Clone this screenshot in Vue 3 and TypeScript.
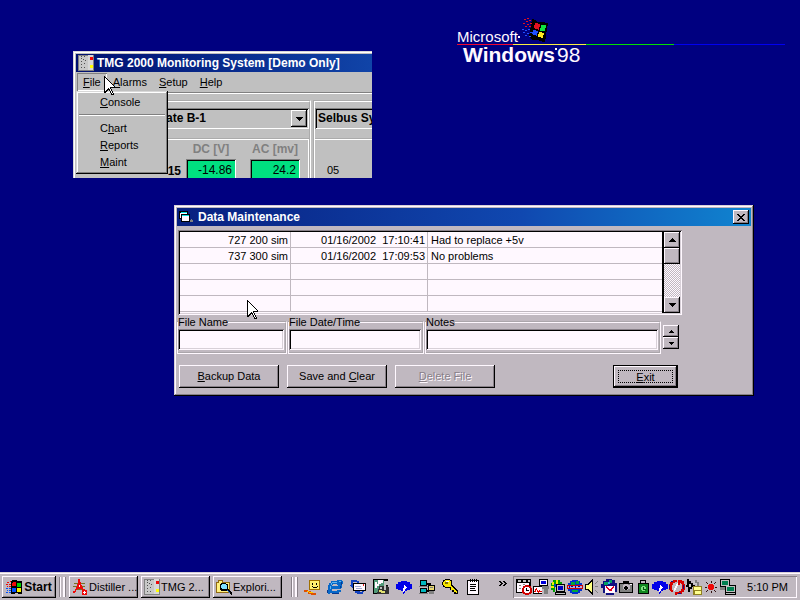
<script setup lang="ts">
import { ref } from 'vue'

type Stroke = [color: string, d: string]

const K = '#000'
const W = '#fff8ff'

/* Pixel icons on a 16x16 grid: each entry is a fill colour and the cells it covers. */
const icons: Record<string, Stroke[]> = {
  panel: [
    ['#808080', 'M0 0h16v16H0z'], ['#c8c8c8', 'M1 1h9v14H1z'], ['#d8d8d8', 'M10 0h5v15h-5z'],
    ['#505050', 'M3 1h1v1H3zM6 1h1v1H6zM3 3h1v1H3zM5 4h1v1H5zM3 6h1v1H3zM7 5h1v1H7zM3 9h1v1H3zM6 8h1v1H6zM3 12h1v1H3zM6 12h1v1H6z'],
    ['#f00808', 'M12 2h3v3h-3z'], ['#ffff00', 'M12 10h3v3h-3z'],
  ],
  form: [
    [K, 'M0 2h9v8H0z'], ['#00e0e0', 'M2 3h6v1H2z'], [W, 'M1 4h7v5H1z'],
    [K, 'M2 5h9v8H2z'], ['#00e0e0', 'M3 6h7v1H3z'], [W, 'M3 7h7v5H3z'], ['#808080', 'M12 10h1v1h1v2h-3v-2h1z'],
  ],
  flag: [
    [K, 'M6 1h5v1h5v13h-4v-1H9v1H5V2h1z'],
    ['#f00808', 'M7 3h3v4H6V4h1zM1 3h2v1H1zM4 2h1v1H4zM0 5h2v1H0zM3 5h2v1H3zM1 7h1v1H1zM3 7h2v1H3z'],
    ['#00d000', 'M11 4h4v4h-4z'], ['#0050ff', 'M6 9h4v4H6zM0 9h2v1H0zM3 9h2v1H3zM1 11h1v1H1zM3 11h2v1H3zM0 13h2v1H0zM3 13h2v1H3z'],
    ['#f8f000', 'M11 9h4v4h-4z'],
  ],
  distiller: [
    ['#787020', 'M2 4h11v1H2zM1 7h12v1H1zM3 10h9v1H3z'],
    ['#f00808', 'M6 0h2v3h1v3h1v2h1v2h2v1h-3v-1H5v1H4v2H3v1H1v-2h2v-2h1V8h1V5h1zM10 11h5v5h-5z'],
    [W, 'M7 6h1v2H7zM12 12h1v1h1v1h-1v1h-1v-1h-1v-1h1z'],
  ],
  explore: [
    ['#906810', 'M0 3h2V1h5v2h7v11H0z'], ['#fff080', 'M1 4h12v9H1zM3 2h3v2H3z'],
    [K, 'M5 4h5v1h2v5h1v1h1v1h1v1h1v1h1v2h-2v-1h-1v-1h-1v-1h-1v-1H5v-1H4V5h1z'],
    ['#80e0ff', 'M6 5h4v1h1v4H6V9H5V6h1z'], ['#1060d0', 'M11 11h1v1h1v1h1v1h-1v-1h-1v-1h-1z'],
  ],
  desktop: [
    ['#a07000', 'M5 1h11v10H5z'], ['#fff070', 'M6 2h9v8H6z'], [K, 'M8 4h1v2H8zM12 4h1v2h-1zM8 7h1v1h4V7h1v1h-1v1H9V8H8z'],
    ['#e05000', 'M0 11h4v1h3v2h5v2H7v-1H4v-2H0z'], ['#ffd000', 'M3 12h2v1h4v1H5v-1H3z'],
  ],
  ie: [
    ['#0868c8', 'M4 2h6V1h5v1h1v3h-1v4h-1v1H5v2h5v-1h4v2h-2v2H5v-1H3v1H1v-1H0v-3h1V6h1V4h2z'],
    ['#60b8f0', 'M5 3h5v1H5zM4 4h1v2H4zM3 7h1v3H3zM12 2h2v1h-2z'],
    ['#c0b8c0', 'M6 5h4v1h1v1H5V6h1z'],
    ['#083890', 'M0 11h1v3H0zM14 3h1v3h-1zM5 14h7v1H5zM13 7h1v2h-1z'],
  ],
  mail: [
    ['#1040c0', 'M1 1h6v1h2v2H7V3H3v3h2l-3 3-3-3h2zM5 12h5v1h2v-2h2v2h-1v2H7v-1H5z'],
    [K, 'M3 4h13v8H3z'], [W, 'M4 5h11v6H4z'], ['#a0a8d0', 'M5 7h6v1H5zM6 9h6v1H6z'], ['#e02020', 'M13 5h1v2h-1z'],
  ],
  viewer: [
    [K, 'M0 0h15v15H0z'], ['#509878', 'M1 1h10v13H1z'], [W, 'M2 3h2v2h2v2H4v2H2zM5 1h5v3H8v1H5z'],
    ['#303030', 'M6 7h9v1h1v7H4v-2h1v-3h1z'], ['#c0c0c0', 'M11 2h4v4h-2v3h-2zM7 8h2v2H7zM11 9h2v2h-2z'], ['#e0e070', 'M6 11h3v1h3v2H8v-1H6z'],
  ],
  talk: [
    ['#0000e8', 'M5 2h6v1h3v2h2v5h-2v1h-3v1H9v2H8v1H7v-3H5v-1H2v-1H0V5h2V3h3z'],
    [W, 'M8 6h1v1h1v1h1v1h-1v1H9v2H8v1H7V9h1z'],
  ],
  network: [
    [K, 'M1 1h7v6H1zM1 9h7v6H1zM8 4h4v2H8zM8 11h5v2H8z'], ['#00b8c0', 'M2 2h5v4H2zM2 10h5v3H2z'],
    ['#808080', 'M0 7h9v1H0zM0 14h9v1H0z'], [K, 'M9 6h7v6H9z'], ['#e8d870', 'M10 7h5v4h-5z'], ['#808080', 'M11 8h3v1h-3zM10 12h5v3h-5z'],
  ],
  key: [
    [K, 'M3 0h5v1h2v5h1v1h1v1h1v1h1v1h1v1h1v4h-4v-2h-2v-2H8v-2H3V8H1V6H0V3h1V1h2z'],
    ['#f8e800', 'M3 1h5v1h1v5h1v1h1v1h1v1h1v1h1v1h1v2h-1v-1h-2v-2H9V8H3V7H2V6H1V3h1V2h1z'],
    ['#807000', 'M3 3h3v2H3z'], [W, 'M4 2h3v1H4z'],
  ],
  notepad: [
    [K, 'M2 1h12v15H2z'], [W, 'M3 2h10v13H3z'], [K, 'M5 0h1v3H5zM7 0h1v3H7zM9 0h1v3H9zM11 0h1v3h-1zM5 5h6v1H5zM5 7h6v1H5zM5 9h5v1H5zM5 11h6v1H5z'],
  ],
  schedule: [
    [K, 'M0 0h15v14H0z'], [W, 'M1 4h12v9H1z'], ['#c0c0c0', 'M2 1h3v2H2zM7 1h3v2H7zM12 1h2v2h-2z'], ['#808080', 'M3 6h2v1H3zM7 5h2v1H7zM3 9h2v1H3z'],
    ['#d00000', 'M9 6h4v1h2v2h1v5h-1v1h-2v1H9v-1H7v-1H6V9h1V7h2z'], [W, 'M9 8h4v1h1v4h-1v1H9v-1H8V9h1z'], [K, 'M10 9h1v2h2v1h-3z'],
  ],
  meter: [
    [K, 'M6 0h9v7H6z'], [W, 'M7 1h7v5H7z'], ['#0000d8', 'M8 2h5v3H8z'], ['#808080', 'M9 7h7v3H9zM11 10h4v5h-4z'],
    [K, 'M0 7h9v8H0z'], [W, 'M1 8h8v6H1z'], ['#e00000', 'M1 12h1v-2h1V9h1v2h1v1h1v-1h1v1h2v1H6v1H5v-1H4v-2H3v2H1z'],
  ],
  dialup: [
    ['#00a000', 'M3 1h7v2h2v4H5v6H3v-2H1V4h2z'], ['#f0f000', 'M2 3h2v3H2zM6 1h2v4H6zM1 7h3v2H1z'], ['#0040c0', 'M4 5h4v3H4z'],
    [K, 'M6 5h9v8H6zM5 13h11v3H5z'], ['#c0c0c0', 'M7 6h7v6H7zM6 14h9v1H6z'], ['#0000c0', 'M8 7h5v4H8z'],
  ],
  globe: [
    ['#0030d0', 'M5 1h6v1h2v2h2v8h-2v2h-2v1H5v-1H3v-2H1V4h2V2h2z'], ['#00a838', 'M4 3h4v3H4zM9 2h3v3H9zM5 11h6v2H5z'],
    ['#d00000', 'M0 6h16v4H0z'], ['#b0b0e0', 'M1 7h14v2H1z'], ['#0000a0', 'M2 7h1v2H2zM4 7h2v1H4zM8 7h1v2H8zM11 7h2v1h-2z'],
  ],
  volume: [
    [K, 'M1 5h3V4h1V3h1V2h1V1h1V0h1v16H8v-1H7v-1H6v-1H5v-1H4v-1H1z'], ['#ffff80', 'M2 6h3V5h1V4h1V3h1v10H7v-1H6v-1H5v-1H2z'],
    ['#808080', 'M11 7h3v1h-3zM11 4h1v1h-1zM12 3h1v1h-1zM13 2h1v1h-1zM11 11h1v1h-1zM12 12h1v1h-1zM13 13h1v1h-1z'],
  ],
  inbox: [
    ['#101080', 'M5 0h6v1h3v3h2v9h-3v3H5v-2H2V9H0V5h2V2h3z'], ['#00a060', 'M3 3h4v3H3zM8 1h3v3H8z'], ['#30b0f0', 'M7 3h2v2H7z'],
    [W, 'M4 7h10v7H4z'], ['#e00020', 'M5 7h1v1h1v1h1v1h2V9h1V8h1V7h1v2h-1v1h-1v2H8v-1H7v-1H6V9H5z'],
  ],
  camera: [
    [K, 'M1 4h4V2h6v2h4v10H1z'], ['#808080', 'M2 5h12v8H2z'], ['#c0b8c0', 'M6 5h4v1h2v4h-2v1H6v-1H5V6h1z'], [K, 'M7 7h2v1h1v2H9v1H7v-1H6V8h1z'], [W, 'M12 5h2v1h-2z'],
  ],
  timer: [
    [K, 'M5 1h6v3h3v11H3V4h2z'], ['#c0b8c0', 'M6 2h4v2H6z'], ['#108820', 'M4 5h9v9H4z'], ['#80e080', 'M7 7h3v1h1v3h-1v1H7v-1H6V8h1z'], ['#005010', 'M8 8h1v2h2v1H8z'],
  ],
  sync: [
    ['#d80000', 'M4 1h4v2H6v1H4v2H3v5h1v2H2v-1H1v-1H0V5h1V3h3zM9 1h4v1h2v3h1v6h-1v2h-2v2H8v1H6v-3h4v-1h2v-2h1V5h-1V4h-1v2H9z'],
    ['#101080', 'M2 2h2v1H2zM0 6h1v4H0zM14 6h1v4h-1zM9 14h3v1H9z'], [W, 'M8 4h1v3H8v2H7v2H6v1H5V9h1V7h1V5h1z'],
  ],
  audio: [
    [K, 'M1 0h2v2h2v2h2v2h2v2H6v2H4v3H2V8H0V6h1z'], ['#c8c8c8', 'M3 5h2v3H3zM7 2h3v2h2v3h-2V5H7z'], ['#808080', 'M9 1h2v2h2v4h-2V4H9z'],
    ['#908020', 'M7 7h9v9H7z'], ['#ffff90', 'M8 8h7v3H8zM9 12h6v3H9z'],
  ],
  sun: [
    ['#f00808', 'M6 5h4v1h1v4h-1v1H6v-1H5V6h1z'],
    ['#301010', 'M8 2h1v2H8zM8 12h1v2H8zM2 8h2v1H2zM12 8h2v1h-2zM3 3h1v1H3zM4 4h1v1H4zM11 4h1v1h-1zM12 3h1v1h-1zM3 12h1v1H3zM4 11h1v1H4zM11 11h1v1h-1zM12 12h1v1h-1z'],
  ],
  lan: [
    [K, 'M0 0h10v8H0zM5 6h11v10H5z'], ['#c0c0c0', 'M1 1h8v6H1zM6 7h9v6H6zM6 14h9v1H6z'], ['#008050', 'M2 2h6v4H2zM7 8h7v4H7z'], ['#808080', 'M0 8h5v3H0z'],
  ],
}

const menus = [['F', 'ile'], ['A', 'larms'], ['S', 'etup'], ['H', 'elp']]
const fileMenu = [['', 'C', 'onsole'], ['C', 'h', 'art'], ['', 'R', 'eports'], ['', 'M', 'aint']]

const records = [
  { name: '727 200 sim', stamp: '01/16/2002  17:10:41', note: 'Had to replace +5v' },
  { name: '737 300 sim', stamp: '01/16/2002  17:09:53', note: 'No problems' },
  { name: '', stamp: '', note: '' },
  { name: '', stamp: '', note: '' },
  { name: '', stamp: '', note: '' },
]

const fileName = ref('')
const fileDate = ref('')
const notes = ref('')

const tasks = [
  { icon: 'distiller', label: 'Distiller ...' },
  { icon: 'panel', label: 'TMG 2...' },
  { icon: 'explore', label: 'Explori...' },
]
const quick = ['desktop', 'ie', 'mail', 'viewer', 'talk', 'network', 'key', 'notepad']
const tray = ['schedule', 'meter', 'dialup', 'globe', 'volume', 'inbox', 'camera', 'timer', 'talk', 'sync', 'audio', 'sun', 'lan']
</script>

<template>
  <div class="desktop">
    <div class="logo">
      <div class="logo-top">Microsoft<i class="dot"></i><svg class="logo-flag" viewBox="0 0 27 26" width="27" height="26">
        <path fill="#000" d="M11 1l3 1 2 2 4 0 7 1-3 19h-2l-6-2-4 0-4-3z" />
        <path fill="#e01020" d="M3 1h2v1H3zM6 0h2v1H6zM5 3h2v1H5zM8 2h2v1H8zM2 5h2v1H2zM6 6h2v1H6zM9 5h2v1H9zM4 8h2v1H4zM8 8h2v1H8zM14 5l5 1-1 6-5-2z" />
        <path fill="#2050ff" d="M1 11h2v1H1zM4 12h2v1H4zM7 11h2v1H7zM2 14h2v1H2zM6 15h2v1H6zM9 14h2v1H9zM4 17h2v1H4zM8 18h2v1H8zM12 12l5 1-1 5-5-2z" />
        <path fill="#10e040" d="M20 7l5 0-1 6-5 0z" />
        <path fill="#ffe820" d="M18 14l5 1-1 5-5-1z" />
      </svg></div>
      <div class="logo-line"><i class="red"></i><i class="yellow"></i><i class="green"></i><i class="blue"></i></div>
      <div class="logo-name"><b>Windows</b><i class="dot"></i><span>98</span></div>
    </div>

    <section class="monitor">
      <header class="title">
        <svg class="ico" viewBox="0 0 16 16"><path v-for="(p, i) in icons.panel" :key="i" :fill="p[0]" :d="p[1]" /></svg>
        <h1>TMG 2000 Monitoring System [Demo Only]</h1>
      </header>
      <nav class="menubar">
        <button v-for="(m, i) in menus" :key="m[1]" type="button" :class="{ open: i === 0 }"><u>{{ m[0] }}</u>{{ m[1] }}</button>
        <div class="dropdown">
          <template v-for="(m, i) in fileMenu" :key="m[2]">
            <button type="button">{{ m[0] }}<u>{{ m[1] }}</u>{{ m[2] }}</button>
            <hr v-if="i === 0">
          </template>
        </div>
      </nav>
      <div class="panels">
        <div class="panel">
          <div class="combo">
            <select aria-label="Site"><option>ate B-1</option></select>
            <span class="arrow"><svg viewBox="0 0 7 4" width="7" height="4"><path d="M0 0h7v1H6v1H5v1H4v1H3V3H2V2H1V1H0z" /></svg></span>
          </div>
          <div class="readings">
            <b class="channel">15</b>
            <div class="reading"><b>DC [V]</b><output>-14.86</output></div>
            <div class="reading"><b>AC [mv]</b><output>24.2</output></div>
          </div>
        </div>
        <div class="panel second">
          <div class="combo">
            <select aria-label="System"><option>Selbus Sy</option></select>
          </div>
          <div class="readings"><span>05</span></div>
        </div>
      </div>
    </section>

    <section class="maintenance">
      <header class="title">
        <svg class="ico" viewBox="0 0 16 16"><path v-for="(p, i) in icons.form" :key="i" :fill="p[0]" :d="p[1]" /></svg>
        <h2>Data Maintenance</h2>
        <button type="button" class="raised close" aria-label="Close">
          <svg viewBox="0 0 8 7" width="8" height="7"><path d="M0 0h2v1h1v1h2V1h1V0h2v1H7v1H6v1H5v1h1v1h1v1h1v1H6V6H5V5H3v1H2v1H0V6h1V5h1V4h1V3H2V2H1V1H0z" /></svg>
        </button>
      </header>
      <div class="body">
        <div class="list">
          <table>
            <tbody>
              <tr v-for="(r, i) in records" :key="i">
                <td class="name">{{ r.name }}</td>
                <td class="stamp">{{ r.stamp }}</td>
                <td class="note">{{ r.note }}</td>
              </tr>
            </tbody>
          </table>
          <div class="scroll">
            <button type="button" class="raised" aria-label="Scroll up"><svg viewBox="0 0 7 4" width="7" height="4"><path d="M3 0h1v1h1v1h1v1h1v1H0V3h1V2h1V1h1z" /></svg></button>
            <span class="raised thumb"></span>
            <span class="track"></span>
            <button type="button" class="raised" aria-label="Scroll down"><svg viewBox="0 0 7 4" width="7" height="4"><path d="M0 0h7v1H6v1H5v1H4v1H3V3H2V2H1V1H0z" /></svg></button>
          </div>
        </div>
        <form class="fields" @submit.prevent>
          <fieldset class="f-name"><legend><label for="file-name">File Name</label></legend><input id="file-name" v-model="fileName" type="text"></fieldset>
          <fieldset class="f-date"><legend><label for="file-date">File Date/Time</label></legend><input id="file-date" v-model="fileDate" type="text"></fieldset>
          <fieldset class="f-notes"><legend><label for="file-notes">Notes</label></legend><input id="file-notes" v-model="notes" type="text"></fieldset>
          <div class="spinner">
            <button type="button" class="raised" aria-label="Previous"><svg viewBox="0 0 5 3" width="5" height="3"><path d="M2 0h1v1h1v1h1v1H0V2h1V1h1z" /></svg></button>
            <button type="button" class="raised" aria-label="Next"><svg viewBox="0 0 5 3" width="5" height="3"><path d="M0 0h5v1H4v1H3v1H2V2H1V1H0z" /></svg></button>
          </div>
        </form>
        <div class="actions">
          <button type="button" class="raised"><span><u>B</u>ackup Data</span></button>
          <button type="button" class="raised"><span>Save and <u>C</u>lear</span></button>
          <button type="button" class="raised" disabled><span><u>D</u>elete File</span></button>
          <button type="button" class="raised exit"><span><u>E</u>xit</span></button>
        </div>
      </div>
    </section>

    <svg class="pointer in-menu" viewBox="0 0 12 20"><path fill="#000" d="M0 0h1v1h1v1h1v1h1v1h1v1h1v1h1v1h1v1h1v1h1v1h1v2H7v1h1v2h1v2h1v2H7v-2H6v-2H5v-1H4v1H3v1H2v1H0z" /><path fill="#fff" d="M1 2h1v1h1v1h1v1h1v1h1v1h1v1h1v1h1v1h1v1H6v2h1v2h1v2h1v1H8v-1H7v-2H6v-2H5v-1H4v1H3v1H2v1H1z" /></svg>
    <svg class="pointer in-list" viewBox="0 0 12 20"><path fill="#000" d="M0 0h1v1h1v1h1v1h1v1h1v1h1v1h1v1h1v1h1v1h1v1h1v2H7v1h1v2h1v2h1v2H7v-2H6v-2H5v-1H4v1H3v1H2v1H0z" /><path fill="#fff" d="M1 2h1v1h1v1h1v1h1v1h1v1h1v1h1v1h1v1h1v1H6v2h1v2h1v2h1v1H8v-1H7v-2H6v-2H5v-1H4v1H3v1H2v1H1z" /></svg>

    <footer class="taskbar">
      <button type="button" class="raised start">
        <svg class="ico" viewBox="0 0 16 16"><path v-for="(p, i) in icons.flag" :key="i" :fill="p[0]" :d="p[1]" /></svg>Start
      </button>
      <i class="grip"></i>
      <div class="tasks">
        <button v-for="t in tasks" :key="t.label" type="button" class="raised">
          <svg class="ico" viewBox="0 0 16 16"><path v-for="(p, i) in icons[t.icon]" :key="i" :fill="p[0]" :d="p[1]" /></svg>{{ t.label }}
        </button>
      </div>
      <i class="grip"></i>
      <div class="quick">
        <button v-for="q in quick" :key="q" type="button" :aria-label="q">
          <svg class="ico" viewBox="0 0 16 16"><path v-for="(p, i) in icons[q]" :key="i" :fill="p[0]" :d="p[1]" /></svg>
        </button>
      </div>
      <svg class="more" viewBox="0 0 8 5" width="8" height="5"><path d="M0 0h2v1h1v1h1v1H3v1H2v1H0V4h1V3h1V2H1V1H0zM4 0h2v1h1v1h1v1H7v1H6v1H4V4h1V3h1V2H5V1H4z" /></svg>
      <div class="tray">
        <svg v-for="t in tray" :key="t" class="ico" viewBox="0 0 16 16"><path v-for="(p, i) in icons[t]" :key="i" :fill="p[0]" :d="p[1]" /></svg>
        <time>5:10 PM</time>
      </div>
    </footer>
  </div>
</template>

<style>
body { background: #000080; }
</style>

<style scoped>
.desktop {
  --face: #c0b8c0;
  --light: #fff8ff;
  --shade: #888088;
  position: relative;
  display: flex;
  flex-direction: column;
  justify-content: flex-end;
  min-height: 100vh;
  overflow: hidden;
  background: #000080;
  color: #000;
  font: 11px/13px "Liberation Sans", Arial, sans-serif;
}
.desktop *, .desktop *::before { box-sizing: border-box; }
button, input, select { font: inherit; color: inherit; margin: 0; padding: 0; border: 0; border-radius: 0; background: none; white-space: nowrap; }
svg { display: block; flex: none; shape-rendering: crispEdges; }
u { text-underline-offset: 1px; }
.ico { width: 16px; height: 16px; }

.raised {
  display: flex;
  align-items: center;
  justify-content: center;
  background: var(--face);
  box-shadow: inset -1px -1px #000, inset 1px 1px var(--light), inset -2px -2px var(--shade);
}

.logo { position: absolute; left: 457px; top: 18px; width: 328px; color: var(--light); }
.logo-top { display: flex; align-items: flex-end; height: 26px; font-size: 15px; line-height: 14px; }
.logo-flag { margin-left: 1px; }
.logo-line { display: flex; height: 1px; }
.logo-line .red { flex: 56; background: #f00830; }
.logo-line .yellow { flex: 73; background: #f8f040; }
.logo-line .green { flex: 88; background: #00e000; }
.logo-line .blue { flex: 111; background: #0000f0; }
.logo-name { display: flex; padding-left: 6px; font-size: 21px; line-height: 20px; }
.dot { width: 2px; height: 2px; background: var(--light); }
.logo-top .dot { margin-bottom: 6px; }
.logo-name .dot { margin-top: 3px; }

.title { display: flex; align-items: center; height: 18px; padding: 0 2px; color: #fff; }
.title h1, .title h2 { flex: 1; margin: 0; padding-left: 3px; font-size: 12px; line-height: 16px; font-weight: bold; white-space: nowrap; }

.monitor {
  --face: #c0c0c0;
  position: absolute; left: 73px; top: 51px; width: 299px; height: 127px;
  overflow: hidden;
  padding: 3px 0 0 3px;
  background: var(--face);
  box-shadow: inset 1px 1px #d8d8d8, inset 2px 2px #fff;
}
.monitor .title { background: linear-gradient(90deg, #001070, #1044a8); }
.menubar { position: relative; display: flex; height: 22px; padding: 1px 0 3px 1px; box-shadow: inset 0 -1px #fff, inset 0 -2px #808080; }
.menubar > button { padding: 1px 6px 0; }
.menubar > .open { box-shadow: inset 1px 1px #808080, inset -1px -1px #fff; }
.dropdown {
  position: absolute; left: 0; top: 19px; z-index: 1;
  width: 92px; padding: 3px;
  background: var(--face);
  box-shadow: inset -1px -1px #000, inset 1px 1px #d8d8d8, inset -2px -2px #808080, inset 2px 2px #fff;
}
.dropdown button { display: block; width: 100%; height: 17px; padding-left: 21px; text-align: left; }
.dropdown hr { height: 2px; margin: 3px 0 4px; border: 0; border-top: 1px solid #808080; border-bottom: 1px solid #fff; }
.panels { display: flex; gap: 2px; padding-top: 6px; }
.panel { flex: none; width: 235px; border: 2px groove #fff; border-left: 0; padding-top: 6px; }
.panel.second { border-left: 2px groove #fff; }
.combo { display: flex; height: 21px; padding: 2px; font-weight: bold; box-shadow: inset 1px 1px #808080, inset -1px -1px #fff, inset 2px 2px #000; }
.combo select { flex: 1; appearance: none; padding-left: 88px; outline: 0; font-size: 12px; }
.second .combo select { padding-left: 1px; }
.combo .arrow { display: grid; place-items: center; width: 16px; box-shadow: inset -1px -1px #000, inset 1px 1px #fff, inset -2px -2px #808080; }
.readings { display: flex; gap: 14px; height: 60px; margin-top: 9px; padding-right: 8px; justify-content: flex-end; border-top: 2px groove #fff; border-right: 1px solid #fff; }
.channel { align-self: flex-start; margin-right: -9px; padding-top: 25px; font-size: 12px; }
.second .readings { justify-content: flex-start; padding: 24px 0 0 12px; }
.reading { display: flex; flex-direction: column; width: 50px; text-align: center; color: #808080; }
.reading b { height: 19px; padding-top: 3px; font-size: 12px; white-space: nowrap; }
.reading output { height: 22px; padding: 5px 4px 0; background: #00e080; color: #000; font-size: 12px; text-align: right; box-shadow: inset 1px 1px #808080, inset -1px -1px #fff, inset 2px 2px #000; }

.maintenance {
  position: absolute; left: 174px; top: 205px; width: 580px;
  padding: 3px;
  background: var(--face);
  box-shadow: inset -1px -1px #000, inset 1px 1px #d8d0d8, inset -2px -2px var(--shade), inset 2px 2px var(--light);
}
.maintenance .title { background: linear-gradient(90deg, #082080, #1048b0 60%, #1084d0); }
.close { width: 16px; height: 14px; }
.body { padding: 4px 69px 5px 0; }
.list {
  display: flex; height: 85px; margin-left: 1px; padding: 2px;
  background: var(--light);
  box-shadow: inset 1px 1px var(--shade), inset -1px -1px var(--light), inset 2px 2px #000, inset -2px -2px #d8d0d8;
}
.list table { flex: 1; table-layout: fixed; border-collapse: separate; border-spacing: 0; height: 80px; }
.list td { height: 16px; padding: 2px 2px 0; border-bottom: 1px solid var(--face); border-right: 1px solid var(--face); white-space: pre; line-height: 13px; }
.list .name { width: 111px; text-align: right; }
.list .stamp { width: 137px; text-align: right; }
.list .note { padding-left: 3px; border-right: 0; }
.scroll { display: flex; flex-direction: column; width: 18px; border-left: 2px solid #000; }
.scroll .raised { height: 16px; width: 16px; }
.track { flex: 1; background: repeating-conic-gradient(var(--face) 0 25%, var(--light) 0 50%) 0 0 / 2px 2px; }
.fields { display: flex; gap: 1px; margin-top: 1px; padding-right: 3px; }
fieldset { min-width: 0; margin: 0; padding: 1px 1px 2px 0; border: 2px groove #fff8ff; border-left-width: 1px; }
legend { padding: 0; height: 12px; line-height: 12px; }
fieldset input { display: block; width: 100%; height: 21px; padding: 0 4px; background: var(--light); outline: 0; box-shadow: inset 1px 1px var(--shade), inset -1px -1px var(--light), inset 2px 2px #000, inset -2px -2px #d8d0d8; }
.f-name { flex: 0 0 110px; }
.f-date { flex: 0 0 136px; }
.f-notes { flex: 1; }
.spinner { display: flex; flex: none; flex-direction: column; width: 16px; margin: 9px 0 0 1px; }
.spinner .raised { height: 12px; }
.actions { display: flex; gap: 8px; margin-top: 11px; padding-left: 2px; }
.actions .raised { width: 100px; height: 23px; }
.actions .raised:disabled { color: var(--shade); text-shadow: 1px 1px var(--light); }
.actions .exit { width: 65px; margin-left: auto; margin-right: 4px; padding: 4px; border: 1px solid #000; }
.exit span { flex: 1; height: 100%; border: 1px dotted #000; line-height: 12px; }

.pointer { position: absolute; z-index: 2; width: 12px; height: 20px; }
.in-menu { left: 104px; top: 76px; }
.in-list { left: 247px; top: 300px; }

.taskbar { display: flex; align-items: center; height: 28px; padding: 4px 3px 2px 2px; background: var(--face); box-shadow: inset 0 1px #d8d0d8, inset 0 2px var(--light); }
.taskbar .raised { height: 22px; }
.start { width: 54px; gap: 2px; font-size: 12px; font-weight: bold; }
.grip { flex: none; width: 7px; height: 20px; margin: 0 3px; border-left: 1px solid var(--shade); box-shadow: inset 1px 0 var(--light), inset -1px 0 var(--shade), inset -3px 0 var(--light); }
.tasks { display: flex; gap: 3px; margin-right: 6px; }
.tasks .raised { width: 69px; justify-content: flex-start; padding-left: 3px; gap: 1px; }
.quick { display: flex; gap: 7px; padding-left: 3px; }
.more { align-self: flex-start; margin: 5px 0 0 auto; }
.tray { display: flex; align-items: center; gap: 1px; height: 22px; margin-left: 6px; padding: 0 9px 0 3px; box-shadow: inset 1px 1px var(--shade), inset -1px -1px var(--light); }
.tray time { padding-left: 10px; white-space: nowrap; }
</style>
